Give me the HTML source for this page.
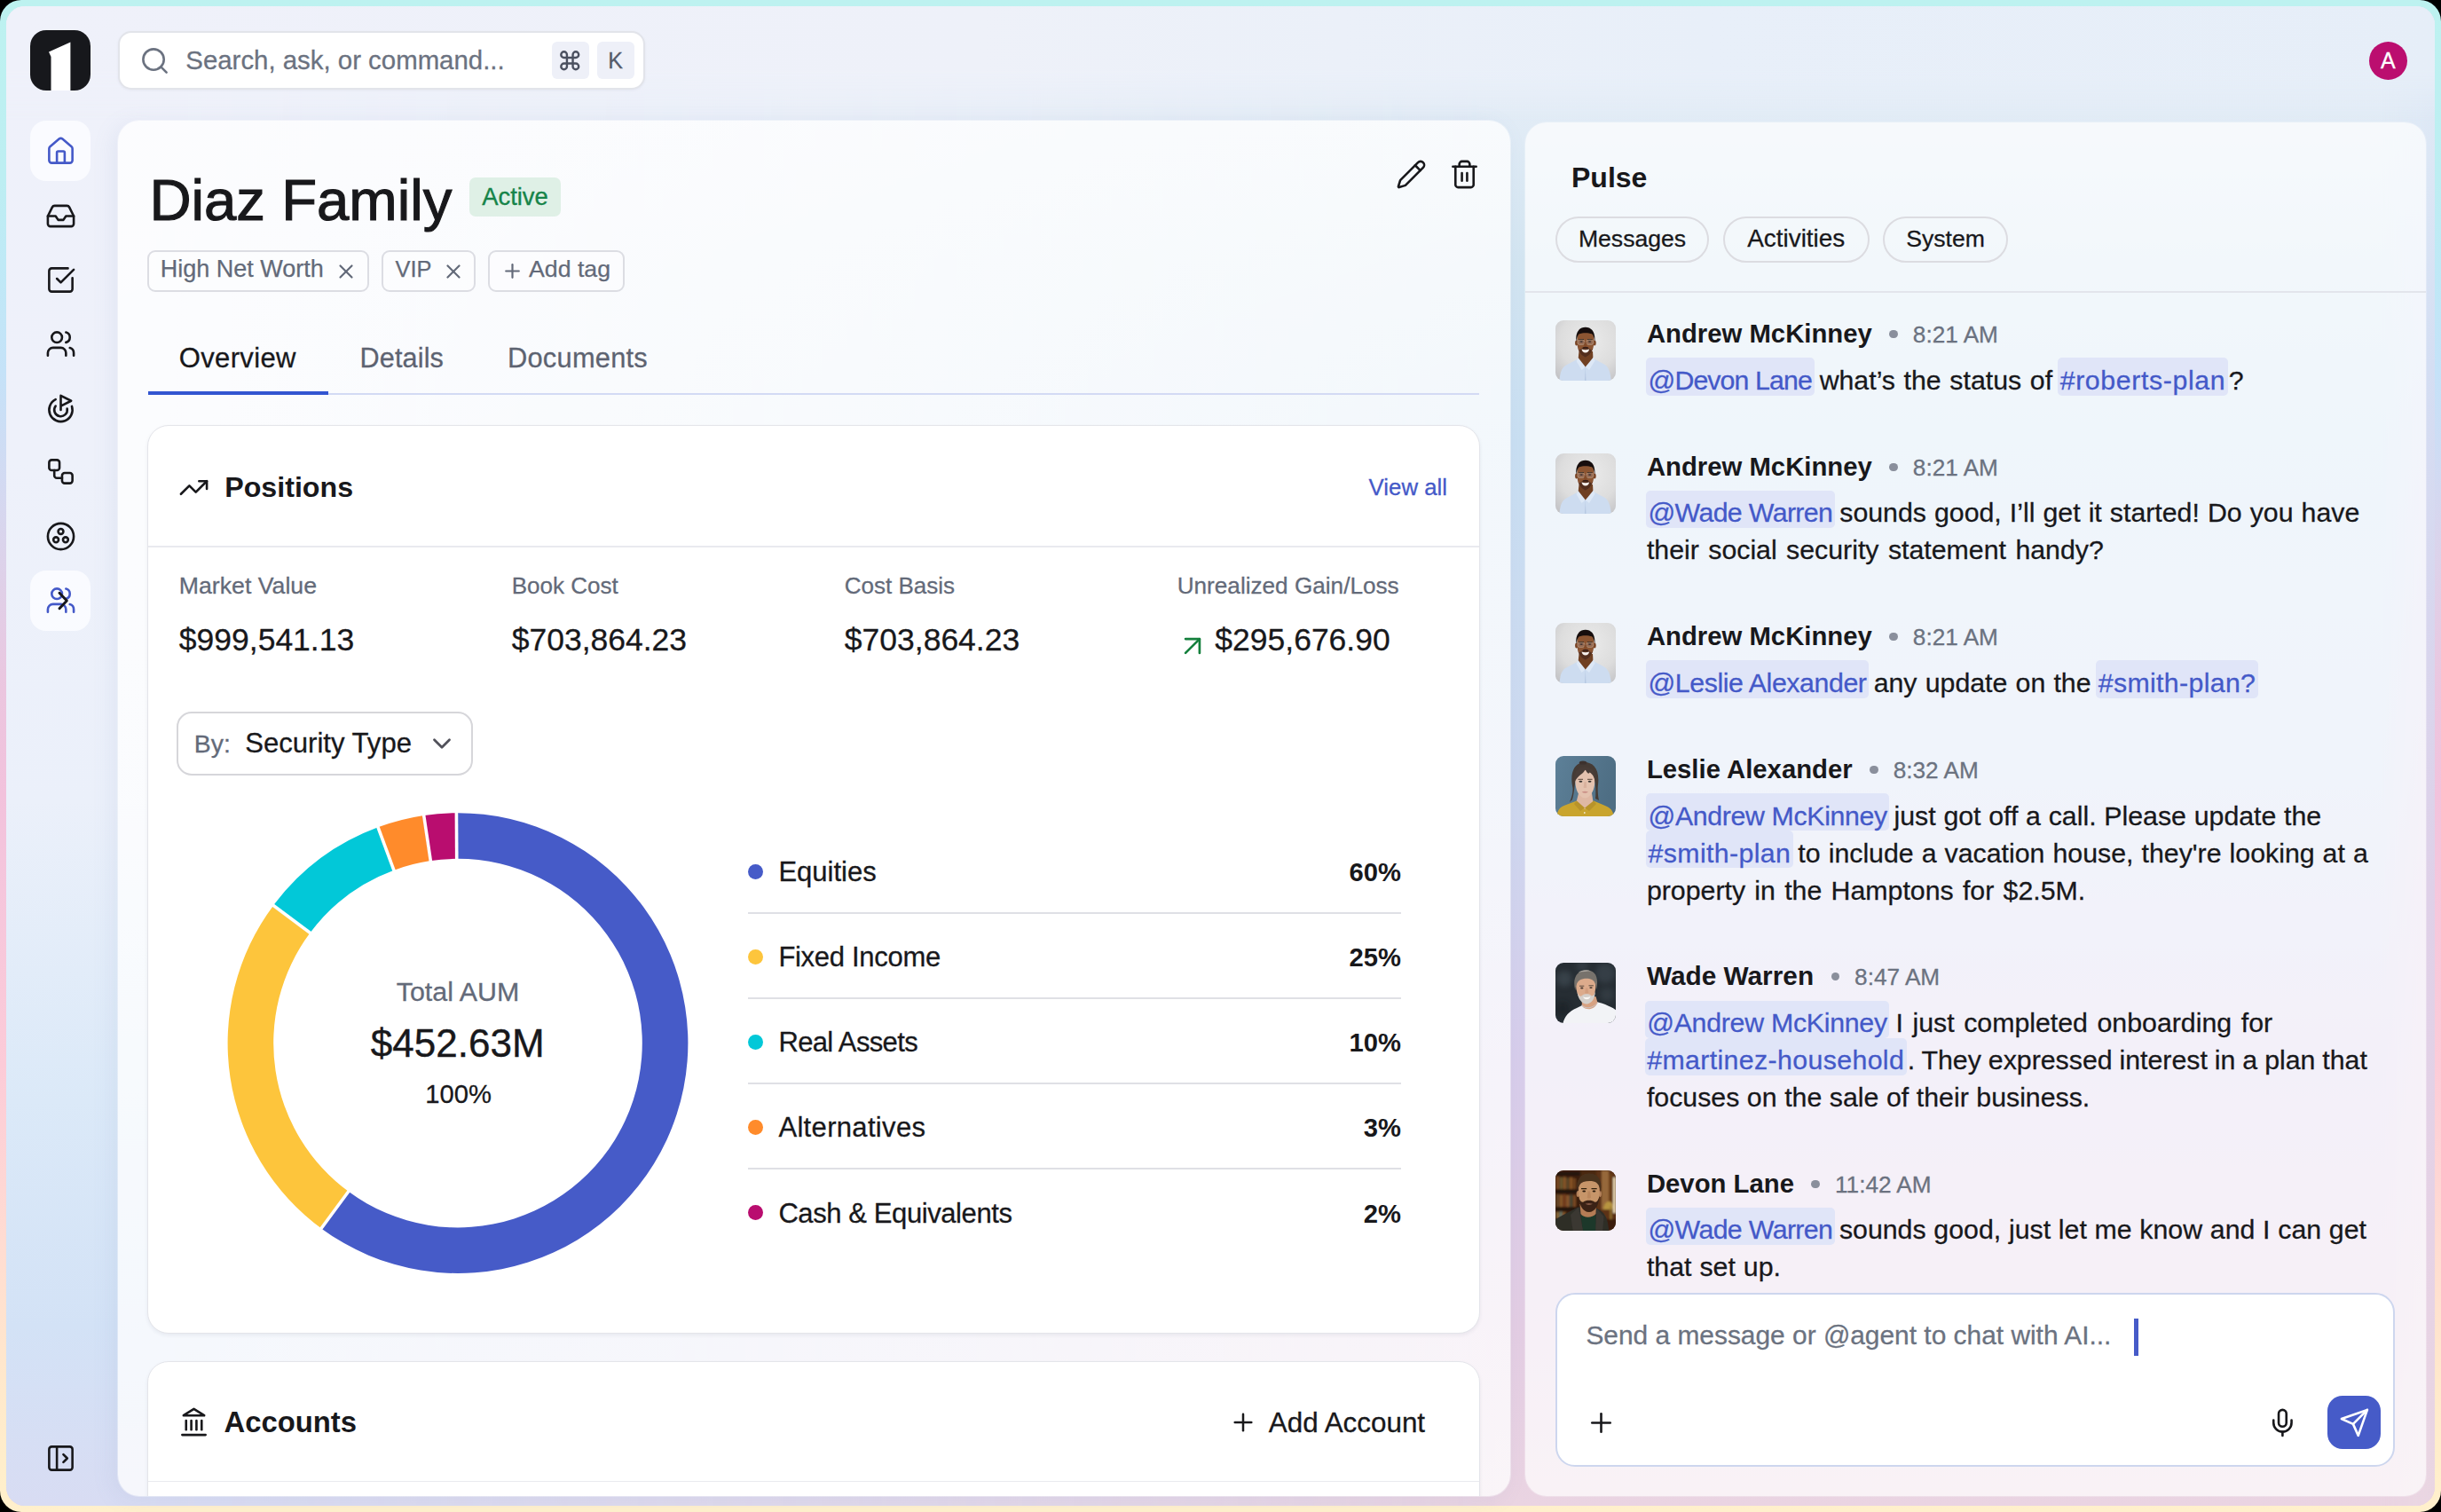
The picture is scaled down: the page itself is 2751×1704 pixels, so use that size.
<!DOCTYPE html>
<html><head><meta charset="utf-8"><title>Diaz Family</title>
<style>
html,body{margin:0;padding:0;}
body{width:2751px;height:1704px;overflow:hidden;background:#000;position:relative;font-family:"Liberation Sans", sans-serif;}
.t{position:absolute;white-space:nowrap;font-family:"Liberation Sans", sans-serif;-webkit-text-stroke-width:0.28px;}
.t.bd{-webkit-text-stroke-width:0;}
.b{position:absolute;box-sizing:border-box;}
.i{position:absolute;overflow:visible;}
.m{background:#e0e5f8;color:#4459c8;border-radius:5px;padding:8.2px 2.5px 0.4px;margin:0 -1px;}

#frame{position:absolute;left:0;top:0;width:2751px;height:1704px;border-radius:24px;
 background:linear-gradient(180deg,#bdf2f0 0.00%,#bdeef2 11.74%,#bfe9f6 17.61%,#c5e2f8 24.59%,#d2daf2 31.57%,#dfd0e8 38.56%,#ebc6df 45.54%,#f2c2dc 52.52%,#f5c6dc 58.69%,#fccbd8 70.42%,#ffdcd2 82.16%,#ffe8cc 90.96%,#ffeecb 96.83%,#fff0cc 100.00%);}
#app{position:absolute;left:7px;top:7px;width:2737px;height:1690px;border-radius:21px;overflow:hidden;
 background:linear-gradient(180deg,#e9eff8 0%,#e2ecf6 7%,#d3e5f1 17%,#c9dff2 29%,#ced9f0 52%,#d7cdeb 70%,#e3cde3 88%,#ead4e2 100%);}
#appl{position:absolute;left:0;top:0;width:2737px;height:1690px;
 background:linear-gradient(180deg,#eff1fa 0%,#eef1fa 30%,#ebf0fa 53%,#dbe9f8 73%,#d3e2f6 88%,#d8dcf3 100%);
 -webkit-mask-image:linear-gradient(90deg,#000 0%,#000 5%,rgba(0,0,0,0.55) 35%,rgba(0,0,0,0.0) 62%);mask-image:linear-gradient(90deg,#000 0%,#000 5%,rgba(0,0,0,0.55) 35%,rgba(0,0,0,0.0) 62%);}
#appr{position:absolute;right:0;top:0;width:60px;height:1690px;
 background:linear-gradient(180deg,#e3ecf6 0%,#dbe6f5 12%,#d4def3 24%,#d8d6ee 41%,#dfd0e8 59%,#e6d2e5 82%,#ead6e2 100%);
 -webkit-mask-image:linear-gradient(270deg,#000 0%,#000 18%,rgba(0,0,0,0) 100%);mask-image:linear-gradient(270deg,#000 0%,#000 18%,rgba(0,0,0,0) 100%);}
#appt{position:absolute;left:0;top:0;width:2737px;height:130px;
 background:linear-gradient(90deg,#eff1fa 0%,#eef1f9 40%,#e8eff9 70%,#e6eef8 100%);
 -webkit-mask-image:linear-gradient(180deg,#000 0%,#000 55%,rgba(0,0,0,0) 100%);mask-image:linear-gradient(180deg,#000 0%,#000 55%,rgba(0,0,0,0) 100%);}

#main{position:absolute;left:133px;top:136.3px;width:1568.5px;height:1549.4px;border-radius:24px;overflow:hidden;
 background:linear-gradient(160deg,rgba(255,255,255,0.80) 0%,rgba(255,255,255,0.77) 50%,rgba(255,255,255,0.77) 100%);
 box-shadow:0 0 0 1px rgba(255,255,255,0.35), -6px 4px 24px rgba(120,140,190,0.10);}
.card{position:absolute;box-sizing:border-box;background:#fff;border:1.5px solid #e4e5ea;border-radius:24px;box-shadow:0 2px 4px rgba(40,50,90,0.07);}
.hl{position:absolute;background:#e7e8ee;height:2px;}
.tag{position:absolute;box-sizing:border-box;border:2px solid #dcdde3;border-radius:9px;background:rgba(255,255,255,0.35);}

#pulse{position:absolute;left:1718.5px;top:137.8px;width:1015.7px;height:1547.9px;border-radius:24px;overflow:hidden;
 background:rgba(255,255,255,0.70);box-shadow:0 0 0 1px rgba(255,255,255,0.25);}
.pill{position:absolute;box-sizing:border-box;border:2px solid #dcdce1;border-radius:26px;height:52px;top:244px;}
.av{position:absolute;width:68px;height:68px;border-radius:9px;overflow:hidden;}

</style></head><body>
<div id="frame"></div><div id="app"><div id="appl"></div><div id="appr"></div><div id="appt"></div></div><svg class="i" style="left:34px;top:34px" width="68" height="68" viewBox="0 0 68 68"><defs><clipPath id="lg"><rect x="0" y="0" width="68" height="68" rx="18" ry="18"/></clipPath></defs><g clip-path="url(#lg)"><rect width="68" height="68" fill="#17181c"/><path d="M23.5 68 L23.5 30 L21 24.5 L45.4 13.6 L45.4 68 Z" fill="#fff"/></g></svg><div class="b" style="left:133.00px;top:35.00px;width:594.00px;height:66.00px;background:#fff;border-radius:15px;border:2px solid #e2e4ea;box-shadow:0 1px 3px rgba(30,40,80,0.05);"></div><svg class="i" style="left:156.50px;top:51.00px;" width="35" height="35" viewBox="0 0 24 24" fill="none" stroke="#6b7280" stroke-width="1.783" stroke-linecap="round" stroke-linejoin="round"><circle cx="11" cy="11" r="8"/><path d="m21 21-4.3-4.3"/></svg><div class="t" style="top:53.00px;font-size:29.4px;line-height:29.4px;color:#6b7280;font-weight:400;left:209.30px;">Search, ask, or command...</div><div class="b" style="left:621.50px;top:47.00px;width:42.20px;height:42.00px;background:#eef0f8;border-radius:6px;"></div><svg class="i" style="left:629.35px;top:54.75px;" width="26.5" height="26.5" viewBox="0 0 24 24" fill="none" stroke="#4b5160" stroke-width="2.174" stroke-linecap="round" stroke-linejoin="round"><path d="M15 6v12a3 3 0 1 0 3-3H6a3 3 0 1 0 3 3V6a3 3 0 1 0-3 3h12a3 3 0 1 0-3-3"/></svg><div class="b" style="left:672.60px;top:47.00px;width:42.20px;height:42.00px;background:#eef0f8;border-radius:6px;"></div><div class="t" style="top:56.00px;font-size:25px;line-height:25px;color:#555b6a;font-weight:400;left:193.70px;width:1000px;text-align:center;">K</div><div class="b" style="left:2669.90px;top:46.70px;width:43.00px;height:43.00px;background:#bb0e6f;border-radius:50%;"></div><div class="t" style="top:56.00px;font-size:25px;line-height:25px;color:#fff;font-weight:400;left:2191.40px;width:1000px;text-align:center;">A</div><div class="b" style="left:34.00px;top:136.30px;width:68.00px;height:67.70px;background:rgba(252,253,255,0.85);border-radius:18px;"></div><div class="b" style="left:34.00px;top:643.30px;width:68.00px;height:67.70px;background:rgba(252,253,255,0.85);border-radius:18px;"></div><svg class="i" style="left:50.50px;top:152.50px;" width="35" height="35" viewBox="0 0 24 24" fill="none" stroke="#4459c8" stroke-width="1.783" stroke-linecap="round" stroke-linejoin="round"><path d="M15 21v-8a1 1 0 0 0-1-1h-4a1 1 0 0 0-1 1v8"/><path d="M3 10a2 2 0 0 1 .709-1.528l7-5.999a2 2 0 0 1 2.582 0l7 5.999A2 2 0 0 1 21 10v9a2 2 0 0 1-2 2H5a2 2 0 0 1-2-2z"/></svg><svg class="i" style="left:50.50px;top:226.10px;" width="35" height="35" viewBox="0 0 24 24" fill="none" stroke="#18181b" stroke-width="1.783" stroke-linecap="round" stroke-linejoin="round"><polyline points="22 12 16 12 14 15 10 15 8 12 2 12"/><path d="M5.45 5.11 2 12v6a2 2 0 0 0 2 2h16a2 2 0 0 0 2-2v-6l-3.45-6.89A2 2 0 0 0 16.76 4H7.24a2 2 0 0 0-1.79 1.11z"/></svg><svg class="i" style="left:50.50px;top:297.60px;" width="35" height="35" viewBox="0 0 24 24" fill="none" stroke="#18181b" stroke-width="1.783" stroke-linecap="round" stroke-linejoin="round"><path d="M21 10.5V19a2 2 0 0 1-2 2H5a2 2 0 0 1-2-2V5a2 2 0 0 1 2-2h12.5"/><path d="m9 11 3 3L22 4"/></svg><svg class="i" style="left:50.50px;top:370.00px;" width="35" height="35" viewBox="0 0 24 24" fill="none" stroke="#18181b" stroke-width="1.783" stroke-linecap="round" stroke-linejoin="round"><path d="M16 21v-2a4 4 0 0 0-4-4H6a4 4 0 0 0-4 4v2"/><circle cx="9" cy="7" r="4"/><path d="M22 21v-2a4 4 0 0 0-3-3.87"/><path d="M16 3.13a4 4 0 0 1 0 7.75"/></svg><svg class="i" style="left:50.50px;top:442.50px;" width="35" height="35" viewBox="0 0 24 24" fill="none" stroke="#18181b" stroke-width="1.783" stroke-linecap="round" stroke-linejoin="round"><path d="M12 13V2l8 4-8 4"/><path d="M20.561 10.222a9 9 0 1 1-12.55-5.29"/><path d="M8.002 9.997a5 5 0 1 0 8.9 2.02"/></svg><svg class="i" style="left:50.50px;top:514.40px;" width="35" height="35" viewBox="0 0 24 24" fill="none" stroke="#18181b" stroke-width="1.783" stroke-linecap="round" stroke-linejoin="round"><rect width="8" height="8" x="3" y="3" rx="2"/><path d="M7 11v4a2 2 0 0 0 2 2h4"/><rect width="8" height="8" x="13" y="13" rx="2"/></svg><svg class="i" style="left:50.50px;top:586.70px;" width="35" height="35" viewBox="0 0 24 24" fill="none" stroke="#18181b" stroke-width="1.783" stroke-linecap="round" stroke-linejoin="round"><circle cx="12" cy="12" r="10"/><circle cx="12" cy="8.2" r="2"/><circle cx="8.3" cy="14.6" r="2"/><circle cx="15.7" cy="14.6" r="2"/></svg><svg class="i" style="left:50.50px;top:659.40px;" width="35" height="35" viewBox="0 0 24 24" fill="none" stroke="#4459c8" stroke-width="1.783" stroke-linecap="round" stroke-linejoin="round"><path d="M16 21v-2a4 4 0 0 0-4-4H6a4 4 0 0 0-4 4v2"/><circle cx="9" cy="7" r="4"/><path d="M22 21v-2a4 4 0 0 0-3-3.87"/><path d="M16 3.13a4 4 0 0 1 0 7.75"/></svg><svg class="i" style="left:50px;top:658.9px" width="36" height="36" viewBox="0 0 36 36" fill="none" stroke="#18181b" stroke-width="3" stroke-linecap="round" stroke-linejoin="round"><path d="M17 9.3 L25.3 18 L17 26.7"/></svg><svg class="i" style="left:50.50px;top:1625.80px;" width="35" height="35" viewBox="0 0 24 24" fill="none" stroke="#18181b" stroke-width="1.783" stroke-linecap="round" stroke-linejoin="round"><rect width="18" height="18" x="3" y="3" rx="2"/><path d="M9 3v18"/><path d="m14 9 3 3-3 3"/></svg><div id="main"><div class="card" style="left:32.599999999999994px;top:342.9px;width:1502.6000000000001px;height:1023.8px;"></div><div class="card" style="left:32.599999999999994px;top:1397.3px;width:1502.6000000000001px;height:300px;"></div></div><div class="t" style="top:193.00px;font-size:65.3px;line-height:65.3px;color:#18181b;font-weight:400;left:168.40px;-webkit-text-stroke:1.1px #18181b;">Diaz Family</div><div class="b" style="left:528.90px;top:200.40px;width:103.30px;height:43.60px;background:#dff0e6;border-radius:7px;"></div><div class="t" style="top:208.00px;font-size:27.4px;line-height:27.4px;color:#168449;font-weight:400;left:80.50px;width:1000px;text-align:center;-webkit-text-stroke:0.35px #168449;">Active</div><svg class="i" style="left:1573.30px;top:178.50px;" width="35" height="35" viewBox="0 0 24 24" fill="none" stroke="#18181b" stroke-width="1.783" stroke-linecap="round" stroke-linejoin="round"><path d="M21.174 6.812a1 1 0 0 0-3.986-3.987L3.842 16.174a2 2 0 0 0-.5.83l-1.321 4.352a.5.5 0 0 0 .623.622l4.353-1.32a2 2 0 0 0 .83-.497z"/><path d="m15 5 4 4"/></svg><svg class="i" style="left:1633.00px;top:178.50px;" width="35" height="35" viewBox="0 0 24 24" fill="none" stroke="#18181b" stroke-width="1.783" stroke-linecap="round" stroke-linejoin="round"><path d="M3 6h18"/><path d="M19 6v14c0 1-1 2-2 2H7c-1 0-2-1-2-2V6"/><path d="M8 6V4c0-1 1-2 2-2h4c1 0 2 1 2 2v2"/><line x1="10" x2="10" y1="11" y2="17"/><line x1="14" x2="14" y1="11" y2="17"/></svg><div class="tag" style="left:165.5px;top:281.5px;width:250.5px;height:47px"></div><div class="t" style="top:290.00px;font-size:27px;line-height:27px;color:#636a79;font-weight:400;left:180.70px;-webkit-text-stroke:0.25px #636a79;">High Net Worth</div><svg class="i" style="left:377.30px;top:292.50px;" width="26" height="26" viewBox="0 0 24 24" fill="none" stroke="#636a79" stroke-width="2.031" stroke-linecap="round" stroke-linejoin="round"><path d="M18 6 6 18"/><path d="m6 6 12 12"/></svg><div class="tag" style="left:429.6px;top:281.5px;width:106.7px;height:47px"></div><div class="t" style="top:291.00px;font-size:25.4px;line-height:25.4px;color:#636a79;font-weight:400;left:445.50px;-webkit-text-stroke:0.25px #636a79;">VIP</div><svg class="i" style="left:497.50px;top:292.50px;" width="26" height="26" viewBox="0 0 24 24" fill="none" stroke="#636a79" stroke-width="2.031" stroke-linecap="round" stroke-linejoin="round"><path d="M18 6 6 18"/><path d="m6 6 12 12"/></svg><div class="tag" style="left:550.4px;top:281.5px;width:154px;height:47px"></div><svg class="i" style="left:565.00px;top:293.00px;" width="25" height="25" viewBox="0 0 24 24" fill="none" stroke="#636a79" stroke-width="2.112" stroke-linecap="round" stroke-linejoin="round"><path d="M5 12h14"/><path d="M12 5v14"/></svg><div class="t" style="top:290.00px;font-size:26.7px;line-height:26.7px;color:#636a79;font-weight:400;left:596.00px;-webkit-text-stroke:0.25px #636a79;">Add tag</div><div class="t" style="top:388.00px;font-size:31px;line-height:31px;color:#18181b;font-weight:400;letter-spacing:0.35px;left:201.80px;">Overview</div><div class="t" style="top:388.00px;font-size:30.6px;line-height:30.6px;color:#5d6371;font-weight:400;letter-spacing:0.15px;left:405.50px;">Details</div><div class="t" style="top:389.00px;font-size:30.8px;line-height:30.8px;color:#5d6371;font-weight:400;letter-spacing:0.25px;left:572.00px;">Documents</div><div class="b" style="left:166.70px;top:442.60px;width:1500.30px;height:2.80px;background:#d3daf4;"></div><div class="b" style="left:166.70px;top:440.90px;width:203.30px;height:4.50px;background:#3355d1;"></div><svg class="i" style="left:200.80px;top:531.50px;" width="35" height="35" viewBox="0 0 24 24" fill="none" stroke="#18181b" stroke-width="1.783" stroke-linecap="round" stroke-linejoin="round"><polyline points="22 7 13.5 15.5 8.5 10.5 2 17"/><polyline points="16 7 22 7 22 13"/></svg><div class="t bd" style="top:533.00px;font-size:32.2px;line-height:32.2px;color:#18181b;font-weight:700;left:253.20px;">Positions</div><div class="t" style="top:537.00px;font-size:25.8px;line-height:25.8px;color:#4459c8;font-weight:400;right:1120.00px;">View all</div><div class="b" style="left:167.00px;top:614.70px;width:1500.00px;height:2.00px;background:#e9eaef;"></div><div class="t" style="top:647.00px;font-size:26.7px;line-height:26.7px;color:#636a79;font-weight:400;left:201.80px;">Market Value</div><div class="t" style="top:647.00px;font-size:26.0px;line-height:26.0px;color:#636a79;font-weight:400;left:576.70px;">Book Cost</div><div class="t" style="top:647.00px;font-size:26.0px;line-height:26.0px;color:#636a79;font-weight:400;left:951.80px;">Cost Basis</div><div class="t" style="top:647.00px;font-size:26.15px;line-height:26.15px;color:#636a79;font-weight:400;left:1326.70px;">Unrealized Gain/Loss</div><div class="t" style="top:704.00px;font-size:35.5px;line-height:35.5px;color:#18181b;font-weight:400;left:201.80px;">$999,541.13</div><div class="t" style="top:704.00px;font-size:35.5px;line-height:35.5px;color:#18181b;font-weight:400;left:576.70px;">$703,864.23</div><div class="t" style="top:704.00px;font-size:35.5px;line-height:35.5px;color:#18181b;font-weight:400;left:951.80px;">$703,864.23</div><svg class="i" style="left:1324.60px;top:708.60px;" width="38" height="38" viewBox="0 0 24 24" fill="none" stroke="#15803d" stroke-width="1.705" stroke-linecap="round" stroke-linejoin="round"><path d="M7 7h10v10"/><path d="M7 17 17 7"/></svg><div class="t" style="top:704.00px;font-size:35.5px;line-height:35.5px;color:#18181b;font-weight:400;left:1369.30px;">$295,676.90</div><div class="b" style="left:199.20px;top:802.40px;width:333.80px;height:71.60px;background:#fff;border:2px solid #d6d6da;border-radius:17px;"></div><div class="t" style="top:824.00px;font-size:28.4px;line-height:28.4px;color:#636a79;font-weight:400;left:218.80px;">By:</div><div class="t" style="top:822.00px;font-size:31.1px;line-height:31.1px;color:#18181b;font-weight:400;left:276.20px;">Security Type</div><svg class="i" style="left:480.80px;top:821.00px;" width="34" height="34" viewBox="0 0 24 24" fill="none" stroke="#52525b" stroke-width="1.976" stroke-linecap="round" stroke-linejoin="round"><path d="m6 9 6 6 6-6"/></svg><svg class="i" style="left:0;top:0" width="2751" height="1704" viewBox="0 0 2751 1704"><path d="M514.42 916.20A259.4 259.4 0 1 1 362.07 1384.39L392.69 1342.86A207.8 207.8 0 1 0 514.73 967.80Z" fill="#465bc8"/><path d="M363.35 1385.33A259.4 259.4 0 0 1 308.13 1020.43L349.48 1051.30A207.8 207.8 0 0 0 393.71 1343.61Z" fill="#fdc53c"/><path d="M307.18 1021.70A259.4 259.4 0 0 1 426.00 932.31L443.91 980.71A207.8 207.8 0 0 0 348.72 1052.32Z" fill="#02c8d8"/><path d="M424.52 932.87A259.4 259.4 0 0 1 477.66 919.05L485.29 970.08A207.8 207.8 0 0 0 442.72 981.15Z" fill="#ff8b2b"/><path d="M476.09 919.29A259.4 259.4 0 0 1 514.42 916.20L514.73 967.80A207.8 207.8 0 0 0 484.03 970.27Z" fill="#b90d6f"/><line x1="393.87" y1="1341.25" x2="360.88" y2="1386.00" stroke="#fff" stroke-width="3.6"/><line x1="351.08" y1="1052.49" x2="306.52" y2="1019.23" stroke="#fff" stroke-width="3.6"/><line x1="444.60" y1="982.58" x2="425.31" y2="930.44" stroke="#fff" stroke-width="3.6"/><line x1="485.58" y1="972.06" x2="477.36" y2="917.07" stroke="#fff" stroke-width="3.6"/><line x1="514.74" y1="969.80" x2="514.40" y2="914.20" stroke="#fff" stroke-width="3.6"/></svg><div class="t" style="top:1102.00px;font-size:30.4px;line-height:30.4px;color:#636a79;font-weight:400;left:16.00px;width:1000px;text-align:center;">Total AUM</div><div class="t" style="top:1154.00px;font-size:44px;line-height:44px;color:#18181b;font-weight:400;left:15.70px;width:1000px;text-align:center;-webkit-text-stroke:0.4px #18181b;">$452.63M</div><div class="t" style="top:1219.00px;font-size:29.2px;line-height:29.2px;color:#18181b;font-weight:400;left:16.70px;width:1000px;text-align:center;">100%</div><div class="b" style="left:842.90px;top:974.10px;width:16.80px;height:16.80px;background:#465bc8;border-radius:50%;"></div><div class="t" style="top:967.00px;font-size:31px;line-height:31px;color:#18181b;font-weight:400;letter-spacing:0px;left:877.40px;">Equities</div><div class="t bd" style="top:969.00px;font-size:29.2px;line-height:29.2px;color:#18181b;font-weight:700;right:1172.00px;">60%</div><div class="b" style="left:842.90px;top:1028.20px;width:736.10px;height:2.00px;background:#dfe0e5;"></div><div class="b" style="left:842.90px;top:1070.15px;width:16.80px;height:16.80px;background:#fdc53c;border-radius:50%;"></div><div class="t" style="top:1063.00px;font-size:31px;line-height:31px;color:#18181b;font-weight:400;letter-spacing:-0.3px;left:877.40px;">Fixed Income</div><div class="t bd" style="top:1065.00px;font-size:29.2px;line-height:29.2px;color:#18181b;font-weight:700;right:1172.00px;">25%</div><div class="b" style="left:842.90px;top:1124.25px;width:736.10px;height:2.00px;background:#dfe0e5;"></div><div class="b" style="left:842.90px;top:1166.20px;width:16.80px;height:16.80px;background:#02c8d8;border-radius:50%;"></div><div class="t" style="top:1159.00px;font-size:31px;line-height:31px;color:#18181b;font-weight:400;letter-spacing:-0.64px;left:877.40px;">Real Assets</div><div class="t bd" style="top:1161.00px;font-size:29.2px;line-height:29.2px;color:#18181b;font-weight:700;right:1172.00px;">10%</div><div class="b" style="left:842.90px;top:1220.30px;width:736.10px;height:2.00px;background:#dfe0e5;"></div><div class="b" style="left:842.90px;top:1262.25px;width:16.80px;height:16.80px;background:#ff8b2b;border-radius:50%;"></div><div class="t" style="top:1255.00px;font-size:31px;line-height:31px;color:#18181b;font-weight:400;letter-spacing:0.33px;left:877.40px;">Alternatives</div><div class="t bd" style="top:1257.00px;font-size:29.2px;line-height:29.2px;color:#18181b;font-weight:700;right:1172.00px;">3%</div><div class="b" style="left:842.90px;top:1316.35px;width:736.10px;height:2.00px;background:#dfe0e5;"></div><div class="b" style="left:842.90px;top:1358.30px;width:16.80px;height:16.80px;background:#b90d6f;border-radius:50%;"></div><div class="t" style="top:1352.00px;font-size:31px;line-height:31px;color:#18181b;font-weight:400;letter-spacing:-0.41px;left:877.40px;">Cash &amp; Equivalents</div><div class="t bd" style="top:1354.00px;font-size:29.2px;line-height:29.2px;color:#18181b;font-weight:700;right:1172.00px;">2%</div><svg class="i" style="left:200.50px;top:1585.30px;" width="35" height="35" viewBox="0 0 24 24" fill="none" stroke="#18181b" stroke-width="1.783" stroke-linecap="round" stroke-linejoin="round"><line x1="3" x2="21" y1="22" y2="22"/><line x1="6" x2="6" y1="18" y2="11"/><line x1="10" x2="10" y1="18" y2="11"/><line x1="14" x2="14" y1="18" y2="11"/><line x1="18" x2="18" y1="18" y2="11"/><polygon points="12 2 20 7 4 7"/></svg><div class="t bd" style="top:1587.00px;font-size:32.8px;line-height:32.8px;color:#18181b;font-weight:700;left:252.60px;">Accounts</div><svg class="i" style="left:1385.00px;top:1586.60px;" width="32" height="32" viewBox="0 0 24 24" fill="none" stroke="#18181b" stroke-width="1.875" stroke-linecap="round" stroke-linejoin="round"><path d="M5 12h14"/><path d="M12 5v14"/></svg><div class="t" style="top:1588.00px;font-size:31.4px;line-height:31.4px;color:#18181b;font-weight:400;left:1429.80px;">Add Account</div><div class="b" style="left:167.00px;top:1668.60px;width:1500.00px;height:1.80px;background:#e9eaef;"></div><div id="pulse"></div><div class="t bd" style="top:184.00px;font-size:32px;line-height:32px;color:#18181b;font-weight:700;left:1771.00px;">Pulse</div><div class="pill" style="left:1753px;width:173px"></div><div class="t" style="top:256.00px;font-size:26.6px;line-height:26.6px;color:#18181b;font-weight:400;left:1339.50px;width:1000px;text-align:center;">Messages</div><div class="pill" style="left:1942px;width:164.5px"></div><div class="t" style="top:255.00px;font-size:27.9px;line-height:27.9px;color:#18181b;font-weight:400;left:1524.25px;width:1000px;text-align:center;">Activities</div><div class="pill" style="left:2122.4px;width:140.4000000000001px"></div><div class="t" style="top:256.00px;font-size:26.6px;line-height:26.6px;color:#18181b;font-weight:400;left:1692.60px;width:1000px;text-align:center;">System</div><div class="b" style="left:1718.50px;top:328.00px;width:1015.70px;height:2.00px;background:#e3e5ec;"></div><div class="av" style="left:1753px;top:361.2px"><svg width="68" height="68" viewBox="0 0 68 68"><defs><radialGradient id="ga" cx="55%" cy="35%" r="80%"><stop offset="0" stop-color="#ebebeb"/><stop offset="0.6" stop-color="#dddddd"/><stop offset="1" stop-color="#c2c2c5"/></radialGradient><filter id="fb" x="-5%" y="-5%" width="110%" height="110%"><feGaussianBlur stdDeviation="0.4"/></filter></defs><rect width="68" height="68" fill="url(#ga)"/><g filter="url(#fb)">
<path d="M4.5 70 C5 58 7 53 13 50 L25.5 43.5 L33.8 52 L42.5 43 L54 49 C60 52 62 58 63 70 Z" fill="#cddcf0"/>
<path d="M26.5 35 L42 35 L42.5 44 L33.8 53 L25.5 44.5 Z" fill="#6f3f22"/>
<path d="M25.5 42 L33.8 52.5 L29.5 56 L23.6 46 Z" fill="#dde8f6"/><path d="M42.8 41.5 L33.8 52.5 L38 56 L44.6 45.5 Z" fill="#dde8f6"/>
<path d="M33.8 52.5 L34.6 70 L32.8 70 Z" fill="#b7c9e2"/>
<ellipse cx="23.7" cy="25.6" rx="1.6" ry="3" fill="#7a4527"/><ellipse cx="44.1" cy="25.6" rx="1.6" ry="3" fill="#7a4527"/>
<path d="M24.3 22 C24.3 14 28 11.5 33.8 11.5 C39.6 11.5 43.5 14 43.5 22 C43.5 30 41.5 35 39 38 C37 40.3 35.5 41.3 33.8 41.3 C32 41.3 30.5 40.3 28.5 38 C26 35 24.3 30 24.3 22Z" fill="#8c5433"/>
<path d="M24.8 27 C25.6 35 29 40.3 33.8 41.4 C38.6 40.3 42 35 43 27 C42.2 32 40.6 35.5 39.3 32.5 C37 29.8 30.6 29.8 28.3 32.5 C27 35.5 25.6 32 24.8 27Z" fill="#43261a" opacity="0.8"/>
<path d="M29.4 32.6 Q33.8 33.8 38.2 32.6 Q37.2 36.6 33.8 36.6 Q30.4 36.6 29.4 32.6Z" fill="#f5efea"/>
<path d="M23.4 24 C22.3 13 27 7.9 33.8 7.8 C40.6 7.9 45.2 13 44.3 24 C43.7 19 42.6 16.6 41 15.3 C37 13.8 30.5 13.8 26.8 15.3 C25.2 16.6 24.1 19 23.4 24Z" fill="#15100e"/>
<path d="M26.4 21.6 h5.4 M36 21.6 h5.4" stroke="#24150e" stroke-width="1.1"/>
<ellipse cx="29.2" cy="24.1" rx="1.6" ry="0.9" fill="#24150e"/><ellipse cx="38.6" cy="24.1" rx="1.6" ry="0.9" fill="#24150e"/>
<rect x="25" y="22" width="7.8" height="5.4" rx="2.2" fill="#c9d3e6" fill-opacity="0.18" stroke="#c2ae94" stroke-width="0.55"/><rect x="34.8" y="22" width="7.8" height="5.4" rx="2.2" fill="#c9d3e6" fill-opacity="0.18" stroke="#c2ae94" stroke-width="0.55"/>
<path d="M30.8 31 Q33.8 29.7 37 31" stroke="#341d12" stroke-width="1.1" fill="none"/>
<path d="M32.4 24.5 L32 29 Q33.8 30 35.6 29 L35.2 24.5Z" fill="#7d4929" opacity="0.7"/>
</g></svg></div><div class="t bd" style="left:1855.9px;top:361px;font-size:29.3px;line-height:29.3px;color:#18181b;font-weight:700">Andrew McKinney<span style="display:inline-block;width:9.5px;height:9.5px;border-radius:50%;background:#8a8f9c;margin:0 17px 0 19.5px;vertical-align:5px"></span><span style="font-weight:400;font-size:26.2px;color:#6b7280;-webkit-text-stroke-width:0.28px">8:21 AM</span></div><div class="b" style="left:1855.00px;top:403.40px;width:189.50px;height:42.20px;background:#e0e5f8;border-radius:5px;"></div><div class="t" style="top:414.00px;font-size:30.3px;line-height:30.3px;color:#4459c8;font-weight:400;letter-spacing:-0.878px;left:1857.50px;">@Devon Lane</div><div class="t" style="top:414.00px;font-size:30.3px;line-height:30.3px;color:#18181b;font-weight:400;left:2041.00px;white-space:pre;word-spacing:1.212px;">&#32;what’s&#32;the&#32;status&#32;of&#32;</div><div class="b" style="left:2319.20px;top:403.40px;width:191.60px;height:42.20px;background:#e0e5f8;border-radius:5px;"></div><div class="t" style="top:414.00px;font-size:30.3px;line-height:30.3px;color:#4459c8;font-weight:400;letter-spacing:0.622px;left:2321.70px;">#roberts-plan</div><div class="t" style="top:414.00px;font-size:30.3px;line-height:30.3px;color:#18181b;font-weight:400;left:2511.80px;white-space:pre;word-spacing:0.000px;">?</div><div class="av" style="left:1753px;top:510.6px"><svg width="68" height="68" viewBox="0 0 68 68"><defs><radialGradient id="ga" cx="55%" cy="35%" r="80%"><stop offset="0" stop-color="#ebebeb"/><stop offset="0.6" stop-color="#dddddd"/><stop offset="1" stop-color="#c2c2c5"/></radialGradient><filter id="fb" x="-5%" y="-5%" width="110%" height="110%"><feGaussianBlur stdDeviation="0.4"/></filter></defs><rect width="68" height="68" fill="url(#ga)"/><g filter="url(#fb)">
<path d="M4.5 70 C5 58 7 53 13 50 L25.5 43.5 L33.8 52 L42.5 43 L54 49 C60 52 62 58 63 70 Z" fill="#cddcf0"/>
<path d="M26.5 35 L42 35 L42.5 44 L33.8 53 L25.5 44.5 Z" fill="#6f3f22"/>
<path d="M25.5 42 L33.8 52.5 L29.5 56 L23.6 46 Z" fill="#dde8f6"/><path d="M42.8 41.5 L33.8 52.5 L38 56 L44.6 45.5 Z" fill="#dde8f6"/>
<path d="M33.8 52.5 L34.6 70 L32.8 70 Z" fill="#b7c9e2"/>
<ellipse cx="23.7" cy="25.6" rx="1.6" ry="3" fill="#7a4527"/><ellipse cx="44.1" cy="25.6" rx="1.6" ry="3" fill="#7a4527"/>
<path d="M24.3 22 C24.3 14 28 11.5 33.8 11.5 C39.6 11.5 43.5 14 43.5 22 C43.5 30 41.5 35 39 38 C37 40.3 35.5 41.3 33.8 41.3 C32 41.3 30.5 40.3 28.5 38 C26 35 24.3 30 24.3 22Z" fill="#8c5433"/>
<path d="M24.8 27 C25.6 35 29 40.3 33.8 41.4 C38.6 40.3 42 35 43 27 C42.2 32 40.6 35.5 39.3 32.5 C37 29.8 30.6 29.8 28.3 32.5 C27 35.5 25.6 32 24.8 27Z" fill="#43261a" opacity="0.8"/>
<path d="M29.4 32.6 Q33.8 33.8 38.2 32.6 Q37.2 36.6 33.8 36.6 Q30.4 36.6 29.4 32.6Z" fill="#f5efea"/>
<path d="M23.4 24 C22.3 13 27 7.9 33.8 7.8 C40.6 7.9 45.2 13 44.3 24 C43.7 19 42.6 16.6 41 15.3 C37 13.8 30.5 13.8 26.8 15.3 C25.2 16.6 24.1 19 23.4 24Z" fill="#15100e"/>
<path d="M26.4 21.6 h5.4 M36 21.6 h5.4" stroke="#24150e" stroke-width="1.1"/>
<ellipse cx="29.2" cy="24.1" rx="1.6" ry="0.9" fill="#24150e"/><ellipse cx="38.6" cy="24.1" rx="1.6" ry="0.9" fill="#24150e"/>
<rect x="25" y="22" width="7.8" height="5.4" rx="2.2" fill="#c9d3e6" fill-opacity="0.18" stroke="#c2ae94" stroke-width="0.55"/><rect x="34.8" y="22" width="7.8" height="5.4" rx="2.2" fill="#c9d3e6" fill-opacity="0.18" stroke="#c2ae94" stroke-width="0.55"/>
<path d="M30.8 31 Q33.8 29.7 37 31" stroke="#341d12" stroke-width="1.1" fill="none"/>
<path d="M32.4 24.5 L32 29 Q33.8 30 35.6 29 L35.2 24.5Z" fill="#7d4929" opacity="0.7"/>
</g></svg></div><div class="t bd" style="left:1855.9px;top:511px;font-size:29.3px;line-height:29.3px;color:#18181b;font-weight:700">Andrew McKinney<span style="display:inline-block;width:9.5px;height:9.5px;border-radius:50%;background:#8a8f9c;margin:0 17px 0 19.5px;vertical-align:5px"></span><span style="font-weight:400;font-size:26.2px;color:#6b7280;-webkit-text-stroke-width:0.28px">8:21 AM</span></div><div class="b" style="left:1855.00px;top:552.80px;width:212.70px;height:42.20px;background:#e0e5f8;border-radius:5px;"></div><div class="t" style="top:563.00px;font-size:30.3px;line-height:30.3px;color:#4459c8;font-weight:400;letter-spacing:-0.642px;left:1857.50px;">@Wade Warren</div><div class="t" style="top:563.00px;font-size:30.3px;line-height:30.3px;color:#18181b;font-weight:400;left:2064.20px;white-space:pre;word-spacing:0.626px;">&#32;sounds&#32;good,&#32;I’ll&#32;get&#32;it&#32;started!&#32;Do&#32;you&#32;have</div><div class="t" style="top:605.00px;font-size:30.3px;line-height:30.3px;color:#18181b;font-weight:400;left:1855.90px;white-space:pre;word-spacing:2.002px;">their&#32;social&#32;security&#32;statement&#32;handy?</div><div class="av" style="left:1753px;top:702.2px"><svg width="68" height="68" viewBox="0 0 68 68"><defs><radialGradient id="ga" cx="55%" cy="35%" r="80%"><stop offset="0" stop-color="#ebebeb"/><stop offset="0.6" stop-color="#dddddd"/><stop offset="1" stop-color="#c2c2c5"/></radialGradient><filter id="fb" x="-5%" y="-5%" width="110%" height="110%"><feGaussianBlur stdDeviation="0.4"/></filter></defs><rect width="68" height="68" fill="url(#ga)"/><g filter="url(#fb)">
<path d="M4.5 70 C5 58 7 53 13 50 L25.5 43.5 L33.8 52 L42.5 43 L54 49 C60 52 62 58 63 70 Z" fill="#cddcf0"/>
<path d="M26.5 35 L42 35 L42.5 44 L33.8 53 L25.5 44.5 Z" fill="#6f3f22"/>
<path d="M25.5 42 L33.8 52.5 L29.5 56 L23.6 46 Z" fill="#dde8f6"/><path d="M42.8 41.5 L33.8 52.5 L38 56 L44.6 45.5 Z" fill="#dde8f6"/>
<path d="M33.8 52.5 L34.6 70 L32.8 70 Z" fill="#b7c9e2"/>
<ellipse cx="23.7" cy="25.6" rx="1.6" ry="3" fill="#7a4527"/><ellipse cx="44.1" cy="25.6" rx="1.6" ry="3" fill="#7a4527"/>
<path d="M24.3 22 C24.3 14 28 11.5 33.8 11.5 C39.6 11.5 43.5 14 43.5 22 C43.5 30 41.5 35 39 38 C37 40.3 35.5 41.3 33.8 41.3 C32 41.3 30.5 40.3 28.5 38 C26 35 24.3 30 24.3 22Z" fill="#8c5433"/>
<path d="M24.8 27 C25.6 35 29 40.3 33.8 41.4 C38.6 40.3 42 35 43 27 C42.2 32 40.6 35.5 39.3 32.5 C37 29.8 30.6 29.8 28.3 32.5 C27 35.5 25.6 32 24.8 27Z" fill="#43261a" opacity="0.8"/>
<path d="M29.4 32.6 Q33.8 33.8 38.2 32.6 Q37.2 36.6 33.8 36.6 Q30.4 36.6 29.4 32.6Z" fill="#f5efea"/>
<path d="M23.4 24 C22.3 13 27 7.9 33.8 7.8 C40.6 7.9 45.2 13 44.3 24 C43.7 19 42.6 16.6 41 15.3 C37 13.8 30.5 13.8 26.8 15.3 C25.2 16.6 24.1 19 23.4 24Z" fill="#15100e"/>
<path d="M26.4 21.6 h5.4 M36 21.6 h5.4" stroke="#24150e" stroke-width="1.1"/>
<ellipse cx="29.2" cy="24.1" rx="1.6" ry="0.9" fill="#24150e"/><ellipse cx="38.6" cy="24.1" rx="1.6" ry="0.9" fill="#24150e"/>
<rect x="25" y="22" width="7.8" height="5.4" rx="2.2" fill="#c9d3e6" fill-opacity="0.18" stroke="#c2ae94" stroke-width="0.55"/><rect x="34.8" y="22" width="7.8" height="5.4" rx="2.2" fill="#c9d3e6" fill-opacity="0.18" stroke="#c2ae94" stroke-width="0.55"/>
<path d="M30.8 31 Q33.8 29.7 37 31" stroke="#341d12" stroke-width="1.1" fill="none"/>
<path d="M32.4 24.5 L32 29 Q33.8 30 35.6 29 L35.2 24.5Z" fill="#7d4929" opacity="0.7"/>
</g></svg></div><div class="t bd" style="left:1855.9px;top:702px;font-size:29.3px;line-height:29.3px;color:#18181b;font-weight:700">Andrew McKinney<span style="display:inline-block;width:9.5px;height:9.5px;border-radius:50%;background:#8a8f9c;margin:0 17px 0 19.5px;vertical-align:5px"></span><span style="font-weight:400;font-size:26.2px;color:#6b7280;-webkit-text-stroke-width:0.28px">8:21 AM</span></div><div class="b" style="left:1855.00px;top:744.40px;width:251.00px;height:42.20px;background:#e0e5f8;border-radius:5px;"></div><div class="t" style="top:755.00px;font-size:30.3px;line-height:30.3px;color:#4459c8;font-weight:400;letter-spacing:-0.417px;left:1857.50px;">@Leslie Alexander</div><div class="t" style="top:755.00px;font-size:30.3px;line-height:30.3px;color:#18181b;font-weight:400;left:2102.50px;white-space:pre;word-spacing:0.756px;">&#32;any&#32;update&#32;on&#32;the&#32;</div><div class="b" style="left:2362.20px;top:744.40px;width:182.60px;height:42.20px;background:#e0e5f8;border-radius:5px;"></div><div class="t" style="top:755.00px;font-size:30.3px;line-height:30.3px;color:#4459c8;font-weight:400;letter-spacing:0.346px;left:2364.70px;">#smith-plan?</div><div class="av" style="left:1753px;top:852.0px"><svg width="68" height="68" viewBox="0 0 68 68"><defs><linearGradient id="gl" x1="0" x2="1" y1="0" y2="0.3"><stop offset="0" stop-color="#5d8098"/><stop offset="1" stop-color="#4e6e84"/></linearGradient><filter id="fl" x="-5%" y="-5%" width="110%" height="110%"><feGaussianBlur stdDeviation="0.45"/></filter></defs><rect width="68" height="68" fill="url(#gl)"/><g filter="url(#fl)">
<path d="M1.5 70 C2 60 5 57.5 12 55 L24 50.5 L33 56 L43 50.5 L56 56 C62 58.5 65 61 66 70 Z" fill="#c9a42f"/>
<path d="M19.5 36 C15.5 18 22 7.5 32.5 7 C43 7 50.5 15 47.8 34 C47.5 40 48 46 49 50 L45 48 C45.8 40 45 32 44 27 L22.5 27 C21.5 34 21 42 19 49 L16 52 C18.5 46 19.8 41 19.500 36Z" fill="#453a35"/>
<ellipse cx="31" cy="7.6" rx="4.2" ry="2.2" fill="#3d332f"/>
<path d="M26 42 L41 42 L42.5 52 L33 60 L23.5 52 Z" fill="#dfb8a4"/>
<path d="M22.3 27 C22.3 20 26 15.5 33 15.5 C40 15.5 44.3 20 44.3 28 C44.3 36 42 41 39 44.3 C37 46.5 35 47.6 33.3 47.6 C31.5 47.6 29.5 46.5 27.5 44.3 C24.5 41 22.3 36 22.3 27Z" fill="#e4c2af"/>
<path d="M21.5 30 C20 20 24 12.5 33 12.2 C42.5 12.5 46.5 20 45 31 C44.3 24.5 42 20.5 38.5 18.5 C36.5 22 35 17 33.5 15.6 C31 21 24.8 21.5 21.500 30Z" fill="#4a3d37"/>
<path d="M25.5 26.3 h5.5 M36 26.3 h5.5" stroke="#4a372e" stroke-width="0.9"/>
<ellipse cx="28.4" cy="28.8" rx="1.9" ry="1" fill="#3a3432"/><ellipse cx="38.6" cy="28.8" rx="1.9" ry="1" fill="#3a3432"/>
<path d="M32.5 29 L31.7 35.5 Q33.4 36.6 35.2 35.5 L34.6 29Z" fill="#d6ad98" opacity="0.8"/>
<path d="M29.6 40.4 Q33.3 39 37 40.4 Q33.3 43.2 29.6 40.4Z" fill="#c98f86"/>
<path d="M24 50.5 L33 58.5 L28 62 L21 54 Z" fill="#b8932a"/><path d="M43 50.5 L33 58.5 L38 62 L46 54 Z" fill="#b8932a"/>
<circle cx="32.8" cy="64" r="0.9" fill="#efe6c8"/>
</g></svg></div><div class="t bd" style="left:1855.9px;top:852px;font-size:29.3px;line-height:29.3px;color:#18181b;font-weight:700">Leslie Alexander<span style="display:inline-block;width:9.5px;height:9.5px;border-radius:50%;background:#8a8f9c;margin:0 17px 0 19.5px;vertical-align:5px"></span><span style="font-weight:400;font-size:26.2px;color:#6b7280;-webkit-text-stroke-width:0.28px">8:32 AM</span></div><div class="b" style="left:1855.00px;top:894.20px;width:274.30px;height:42.20px;background:#e0e5f8;border-radius:5px;"></div><div class="t" style="top:905.00px;font-size:30.3px;line-height:30.3px;color:#4459c8;font-weight:400;letter-spacing:-0.351px;left:1857.50px;">@Andrew McKinney</div><div class="t" style="top:905.00px;font-size:30.3px;line-height:30.3px;color:#18181b;font-weight:400;left:2125.80px;white-space:pre;word-spacing:0.314px;">&#32;just&#32;got&#32;off&#32;a&#32;call.&#32;Please&#32;update&#32;the</div><div class="b" style="left:1855.00px;top:936.20px;width:165.80px;height:42.20px;background:#e0e5f8;border-radius:5px;"></div><div class="t" style="top:947.00px;font-size:30.3px;line-height:30.3px;color:#4459c8;font-weight:400;letter-spacing:0.381px;left:1857.50px;">#smith-plan</div><div class="t" style="top:947.00px;font-size:30.3px;line-height:30.3px;color:#18181b;font-weight:400;left:2017.30px;white-space:pre;word-spacing:0.632px;">&#32;to&#32;include&#32;a&#32;vacation&#32;house,&#32;they're&#32;looking&#32;at&#32;a</div><div class="t" style="top:989.00px;font-size:30.3px;line-height:30.3px;color:#18181b;font-weight:400;left:1855.90px;white-space:pre;word-spacing:1.860px;">property&#32;in&#32;the&#32;Hamptons&#32;for&#32;$2.5M.</div><div class="av" style="left:1753px;top:1085.4px"><svg width="68" height="68" viewBox="0 0 68 68"><defs><filter id="fw" x="-5%" y="-5%" width="110%" height="110%"><feGaussianBlur stdDeviation="0.45"/></filter><filter id="fw2"><feGaussianBlur stdDeviation="3"/></filter></defs><rect width="68" height="68" fill="#262d33"/><g filter="url(#fw2)" opacity="0.55"><circle cx="10" cy="18" r="9" fill="#46525b"/><circle cx="56" cy="12" r="11" fill="#424e57"/><circle cx="8" cy="52" r="8" fill="#181d21"/><circle cx="58" cy="36" r="8" fill="#3c474f"/><circle cx="30" cy="4" r="7" fill="#3c474f"/></g><g filter="url(#fw)">
<path d="M8 70 C10 60 15 55 24 51 L31 47.5 L45 43.5 C56 46.5 64 50 69 54 L69 70 Z" fill="#f2f3f6"/>
<path d="M29.5 40 L45.5 38 L47.5 45 C44 53 35 54.5 30 49 Z" fill="#d7a282"/>
<path d="M23.5 30 C22 20 27 14.5 35 14.8 C43 15 46.5 21 45 30 C44 38 41 43.5 36.5 45.5 C31 46 25.5 40 23.500 30Z" fill="#dcab8c"/>
<path d="M22.3 31 C18.5 16 25.5 8.5 34.5 8.6 C44 8.3 49.5 15 46 30.5 C45.8 24 44 20.5 41 19 C37 17.2 31 17.6 27.5 19.5 C24.5 21.5 23 25 22.300 31Z" fill="#77726c"/>
<path d="M26 11 C29 8 36 7.5 40 9.5 C36 9.5 30 10 26 11Z" fill="#a9a49e"/>
<path d="M24.5 33 C25.5 41 30 46.8 36 46.4 C41.5 45.5 44.5 39.5 45 32.5 C43.5 37 41.5 38.5 39.8 36.5 C37.5 34.8 32.5 35 30.2 36.8 C28 39 26 37.5 24.5 33Z" fill="#d4cfca"/>
<path d="M31 38.2 Q35.2 40 39.5 38 Q38.2 41.2 35.2 41.2 Q32.2 41.200 31 38.2Z" fill="#fbf8f5"/>
<path d="M27 26.2 h5.3 M37.5 25.8 h5.3" stroke="#5a4a40" stroke-width="1"/>
<ellipse cx="29.8" cy="28.5" rx="1.7" ry="0.9" fill="#4a3a32"/><ellipse cx="40" cy="28.1" rx="1.7" ry="0.9" fill="#4a3a32"/>
<path d="M34 28.5 L33.2 34 Q35.2 35.2 37.2 34 L36.4 28.5Z" fill="#cf9b7c" opacity="0.8"/>
<path d="M29.5 47.500 C33 52.5 42 52 47.5 45" stroke="#c9cbd2" stroke-width="0.8" fill="none"/>
</g></svg></div><div class="t bd" style="left:1855.9px;top:1085px;font-size:29.8px;line-height:29.8px;color:#18181b;font-weight:700">Wade Warren<span style="display:inline-block;width:9.5px;height:9.5px;border-radius:50%;background:#8a8f9c;margin:0 17px 0 19.5px;vertical-align:5px"></span><span style="font-weight:400;font-size:26.2px;color:#6b7280;-webkit-text-stroke-width:0.28px">8:47 AM</span></div><div class="b" style="left:1853.70px;top:1127.60px;width:275.60px;height:42.20px;background:#e0e5f8;border-radius:5px;"></div><div class="t" style="top:1138.00px;font-size:30.3px;line-height:30.3px;color:#4459c8;font-weight:400;letter-spacing:-0.27px;left:1856.20px;">@Andrew McKinney</div><div class="t" style="top:1138.00px;font-size:30.3px;line-height:30.3px;color:#18181b;font-weight:400;left:2125.80px;white-space:pre;word-spacing:2.176px;">&#32;I&#32;just&#32;completed&#32;onboarding&#32;for</div><div class="b" style="left:1853.70px;top:1169.60px;width:295.00px;height:42.20px;background:#e0e5f8;border-radius:5px;"></div><div class="t" style="top:1180.00px;font-size:30.3px;line-height:30.3px;color:#4459c8;font-weight:400;letter-spacing:0.371px;left:1856.20px;">#martinez-household</div><div class="t" style="top:1180.00px;font-size:30.3px;line-height:30.3px;color:#18181b;font-weight:400;left:2149.70px;white-space:pre;word-spacing:-0.476px;">.&#32;They&#32;expressed&#32;interest&#32;in&#32;a&#32;plan&#32;that</div><div class="t" style="top:1222.00px;font-size:30.3px;line-height:30.3px;color:#18181b;font-weight:400;left:1855.90px;white-space:pre;word-spacing:0.147px;">focuses&#32;on&#32;the&#32;sale&#32;of&#32;their&#32;business.</div><div class="av" style="left:1753px;top:1318.6px"><svg width="68" height="68" viewBox="0 0 68 68"><defs><filter id="fd" x="-5%" y="-5%" width="110%" height="110%"><feGaussianBlur stdDeviation="0.45"/></filter><filter id="fd2"><feGaussianBlur stdDeviation="0.8"/></filter></defs><rect width="68" height="68" fill="#4a2810"/><g filter="url(#fd2)">
<rect x="0" y="0" width="28" height="56" fill="#3a1f0c"/>
<g fill="#7a4a24"><rect x="1" y="7" width="3.4" height="14"/><rect x="5" y="8" width="3" height="13" fill="#6a5a30"/><rect x="8.6" y="7.5" width="3.2" height="13.5" fill="#8a5a2c"/><rect x="12.400" y="8.500" width="3" height="12.5" fill="#5f4a2a"/><rect x="16" y="8" width="3.4" height="13" fill="#8a5526"/><rect x="20" y="9" width="3" height="12" fill="#70431f"/>
<rect x="1" y="27" width="3.2" height="14" fill="#6a4a2a"/><rect x="4.8" y="27.500" width="3.200" height="13.5" fill="#8a5a2a"/><rect x="8.6" y="27" width="3" height="14" fill="#7a3f20"/><rect x="12.2" y="28" width="3.400" height="13" fill="#8c5a30"/><rect x="16.2" y="27.500" width="3" height="13.5" fill="#4a4a38"/><rect x="19.8" y="28" width="3.200" height="13" fill="#7a4a22"/>
<rect x="1" y="47" width="3" height="7" fill="#8a6a3a"/><rect x="4.600" y="46.5" width="3" height="7.5" fill="#6a7a6a"/><rect x="8.2" y="47" width="3" height="7" fill="#8a5a2a"/></g>
<g fill="#231207"><rect x="0" y="2" width="28" height="3.6"/><rect x="0" y="21.5" width="28" height="4.2"/><rect x="0" y="41.5" width="28" height="4"/></g>
<rect x="46" y="0" width="22" height="68" fill="#5c3314"/><rect x="52" y="0" width="8" height="44" fill="#96683a"/><rect x="60" y="4" width="4" height="40" fill="#6a3c18"/><rect x="65" y="8" width="3" height="40" fill="#ead9b4"/>
<path d="M54 44 C55 36 59 33.500 63 36 C65 38 65.5 41 64.5 44 Z" fill="#b89540"/><rect x="61.500" y="40" width="1.8" height="18" fill="#9a7a30"/><ellipse cx="63" cy="58" rx="4" ry="1.6" fill="#a08035"/>
<rect x="52" y="55" width="16" height="13" fill="#3a1c0c"/>
</g><g filter="url(#fd)">
<path d="M-1 70 L-1 56 C6 51 15 47 25 41.500 L47 43 C55 47 59 52 60.500 70 Z" fill="#2f2d28"/>
<path d="M28.500 50 L45 50 L46 70 L31 70 Z" fill="#1d3829"/>
<path d="M26 41.500 L31.500 70 L20 70 L17 50 Z" fill="#3a3832"/><path d="M46.500 43 L45 70 L53 70 L54.500 52 Z" fill="#3a3832"/>
<path d="M27.500 38 L46 38 L45.500 49 C41 54 32 54 28.500 49 Z" fill="#b47c54"/>
<ellipse cx="25.300" cy="26.5" rx="1.7" ry="3.4" fill="#b5825a"/><ellipse cx="50.200" cy="26.5" rx="1.7" ry="3.4" fill="#b5825a"/>
<path d="M25.800 24 C25.500 13 30 7.500 38 7.500 C46 7.500 50.200 13 49.800 24 C49.500 34 46.500 41 43 44 C40.500 46 39 46.500 37.800 46.500 C36.500 46.500 35 46 32.500 44 C29 41 26 34 25.800 24Z" fill="#c79569"/>
<path d="M24.800 25 C22 10 29 3.200 38 3.400 C47.500 3.200 53.500 10 50.800 25 C50.200 17.500 47.500 13.500 43 12.500 C39.500 11.800 35 12 31.500 13 C27.500 14.500 25.500 18.500 24.800 25Z" fill="#4a311f"/>
<path d="M25.900 28.500 C26.500 39 31 47 37.800 47 C44.500 47 49.200 39 49.700 28.500 C48.500 34 46.500 36.500 44 35.500 C41.500 33.200 34 33.200 31.600 35.500 C29 36.500 27 34 25.900 28.500Z" fill="#3a2415"/>
<path d="M33.500 37.800 Q37.800 36.600 42 37.800 Q37.800 39.800 33.500 37.800Z" fill="#a06a58"/>
<path d="M29 20.600 h6.200 M40.500 20.600 h6.200" stroke="#33200f" stroke-width="1.2"/>
<ellipse cx="32.200" cy="23.400" rx="1.9" ry="1" fill="#2a1a10"/><ellipse cx="43.500" cy="23.400" rx="1.9" ry="1" fill="#2a1a10"/>
<path d="M36.600 23.500 L35.800 31 Q37.800 32.300 39.900 31 L39.100 23.500Z" fill="#b8835a" opacity="0.8"/>
</g></svg></div><div class="t bd" style="left:1855.9px;top:1319px;font-size:29.3px;line-height:29.3px;color:#18181b;font-weight:700">Devon Lane<span style="display:inline-block;width:9.5px;height:9.5px;border-radius:50%;background:#8a8f9c;margin:0 17px 0 19.5px;vertical-align:5px"></span><span style="font-weight:400;font-size:26.2px;color:#6b7280;-webkit-text-stroke-width:0.28px">11:42 AM</span></div><div class="b" style="left:1855.00px;top:1360.80px;width:212.70px;height:42.20px;background:#e0e5f8;border-radius:5px;"></div><div class="t" style="top:1371.00px;font-size:30.3px;line-height:30.3px;color:#4459c8;font-weight:400;letter-spacing:-0.642px;left:1857.50px;">@Wade Warren</div><div class="t" style="top:1371.00px;font-size:30.3px;line-height:30.3px;color:#18181b;font-weight:400;left:2064.20px;white-space:pre;word-spacing:0.322px;">&#32;sounds&#32;good,&#32;just&#32;let&#32;me&#32;know&#32;and&#32;I&#32;can&#32;get</div><div class="t" style="top:1413.00px;font-size:30.3px;line-height:30.3px;color:#18181b;font-weight:400;left:1855.90px;white-space:pre;word-spacing:0.597px;">that&#32;set&#32;up.</div><div class="b" style="left:1753.00px;top:1456.90px;width:946.00px;height:195.90px;background:#fff;border:2px solid #cdd6ee;border-radius:22px;"></div><div class="t" style="top:1490.00px;font-size:29.9px;line-height:29.9px;color:#6b7280;font-weight:400;left:1787.40px;">Send a message or @agent to chat with AI...</div><div class="b" style="left:2405.00px;top:1485.70px;width:5.00px;height:42.20px;background:#465bc8;"></div><svg class="i" style="left:1786.50px;top:1585.50px;" width="35" height="35" viewBox="0 0 24 24" fill="none" stroke="#18181b" stroke-width="1.783" stroke-linecap="round" stroke-linejoin="round"><path d="M5 12h14"/><path d="M12 5v14"/></svg><svg class="i" style="left:2554.90px;top:1585.50px;" width="34.8" height="34.8" viewBox="0 0 24 24" fill="none" stroke="#18181b" stroke-width="1.793" stroke-linecap="round" stroke-linejoin="round"><path d="M12 2a3 3 0 0 0-3 3v7a3 3 0 0 0 6 0V5a3 3 0 0 0-3-3Z"/><path d="M19 10v2a7 7 0 0 1-14 0v-2"/><line x1="12" x2="12" y1="19" y2="22"/></svg><div class="b" style="left:2623.20px;top:1573.10px;width:59.70px;height:59.60px;background:#465bc8;border-radius:17px;"></div><svg class="i" style="left:2635.60px;top:1585.60px;" width="34.8" height="34.8" viewBox="0 0 24 24" fill="none" stroke="#fff" stroke-width="1.793" stroke-linecap="round" stroke-linejoin="round"><path d="m22 2-7 20-4-9-9-4Z"/><path d="M22 2 11 13"/></svg>
</body></html>
